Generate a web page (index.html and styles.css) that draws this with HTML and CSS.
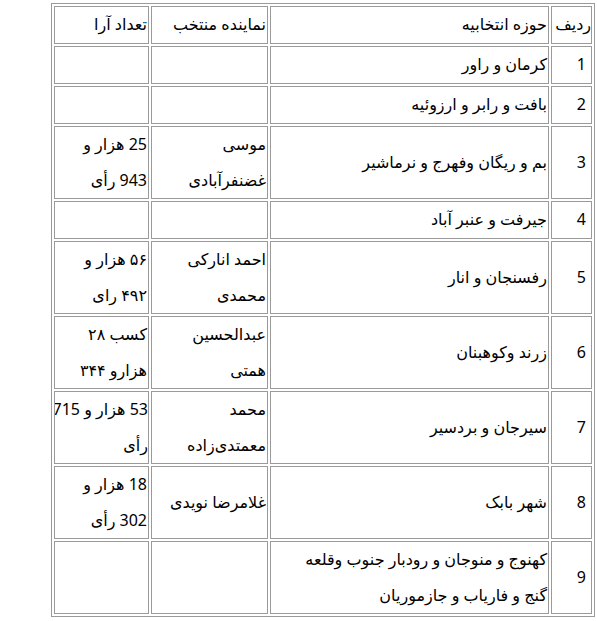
FILE: index.html
```html
<!DOCTYPE html>
<html lang="fa" dir="rtl">
<head>
<meta charset="utf-8">
<link rel="stylesheet" href="styles.css">
</head>
<body>
<table class="results">
  <colgroup>
    <col class="c-num">
    <col class="c-area">
    <col class="c-rep">
    <col class="c-votes">
  </colgroup>
  <tr class="r1">
    <td class="head-num">ردیف</td>
    <td>حوزه انتخابیه</td>
    <td>نماینده منتخب</td>
    <td>تعداد آرا</td>
  </tr>
  <tr class="r1">
    <td class="num">1</td>
    <td>کرمان و راور</td>
    <td></td>
    <td></td>
  </tr>
  <tr class="r1">
    <td class="num">2</td>
    <td>بافت و رابر و ارزوئیه</td>
    <td></td>
    <td></td>
  </tr>
  <tr>
    <td class="num">3</td>
    <td>بم و ریگان وفهرج و نرماشیر</td>
    <td>موسی<br>غضنفرآبادی</td>
    <td>25 هزار و<br>943 رأی</td>
  </tr>
  <tr class="r1">
    <td class="num">4</td>
    <td>جیرفت و عنبر آباد</td>
    <td></td>
    <td></td>
  </tr>
  <tr>
    <td class="num">5</td>
    <td>رفسنجان و انار</td>
    <td>احمد انارکی<br>محمدی</td>
    <td>۵۶ هزار و<br>۴۹۲ رای</td>
  </tr>
  <tr>
    <td class="num">6</td>
    <td>زرند وکوهبنان</td>
    <td>عبدالحسین<br>همتی</td>
    <td>کسب ۲۸<br>هزارو ۳۴۴</td>
  </tr>
  <tr>
    <td class="num">7</td>
    <td>سیرجان و بردسیر</td>
    <td>محمد<br>معمتدی‌زاده</td>
    <td class="tight">53 هزار و 715<br>رأی</td>
  </tr>
  <tr>
    <td class="num">8</td>
    <td>شهر بابک</td>
    <td>غلامرضا نویدی</td>
    <td>18 هزار و<br>302 رأی</td>
  </tr>
  <tr>
    <td class="num">9</td>
    <td>کهنوج و منوجان و رودبار جنوب وقلعه<br>گنج و فاریاب و جازموریان</td>
    <td></td>
    <td></td>
  </tr>
</table>
</body>
</html>
```

FILE: styles.css
```css
html, body {
  background: #ffffff;
}
body {
  margin: 3px 2px 0 0;
  direction: rtl;
  font-family: "Noto Sans", "DejaVu Sans", sans-serif;
  font-size: 16px;
  color: #000000;
}
.results {
  width: 544px;
  border-collapse: separate;
  border-spacing: 2px;
  border: 1px solid #9a9a9a;
  table-layout: fixed;
}
.c-num { width: 41px; }
.c-area { width: 279px; }
.c-rep { width: 117px; }
.c-votes { width: 95px; }
.results td {
  border: 1px solid #9a9a9a;
  padding: 0 1px;
  line-height: 35.5px;
  vertical-align: middle;
  text-align: right;
  white-space: nowrap;
  overflow: hidden;
}
.results td.num {
  padding-right: 5px;
}
.results td.head-num {
  padding: 0;
  letter-spacing: -0.4px;
}
.results td.tight {
  padding: 0;
  letter-spacing: -0.4px;
}
.results tr.r1 td {
  height: 36px;
}
```
